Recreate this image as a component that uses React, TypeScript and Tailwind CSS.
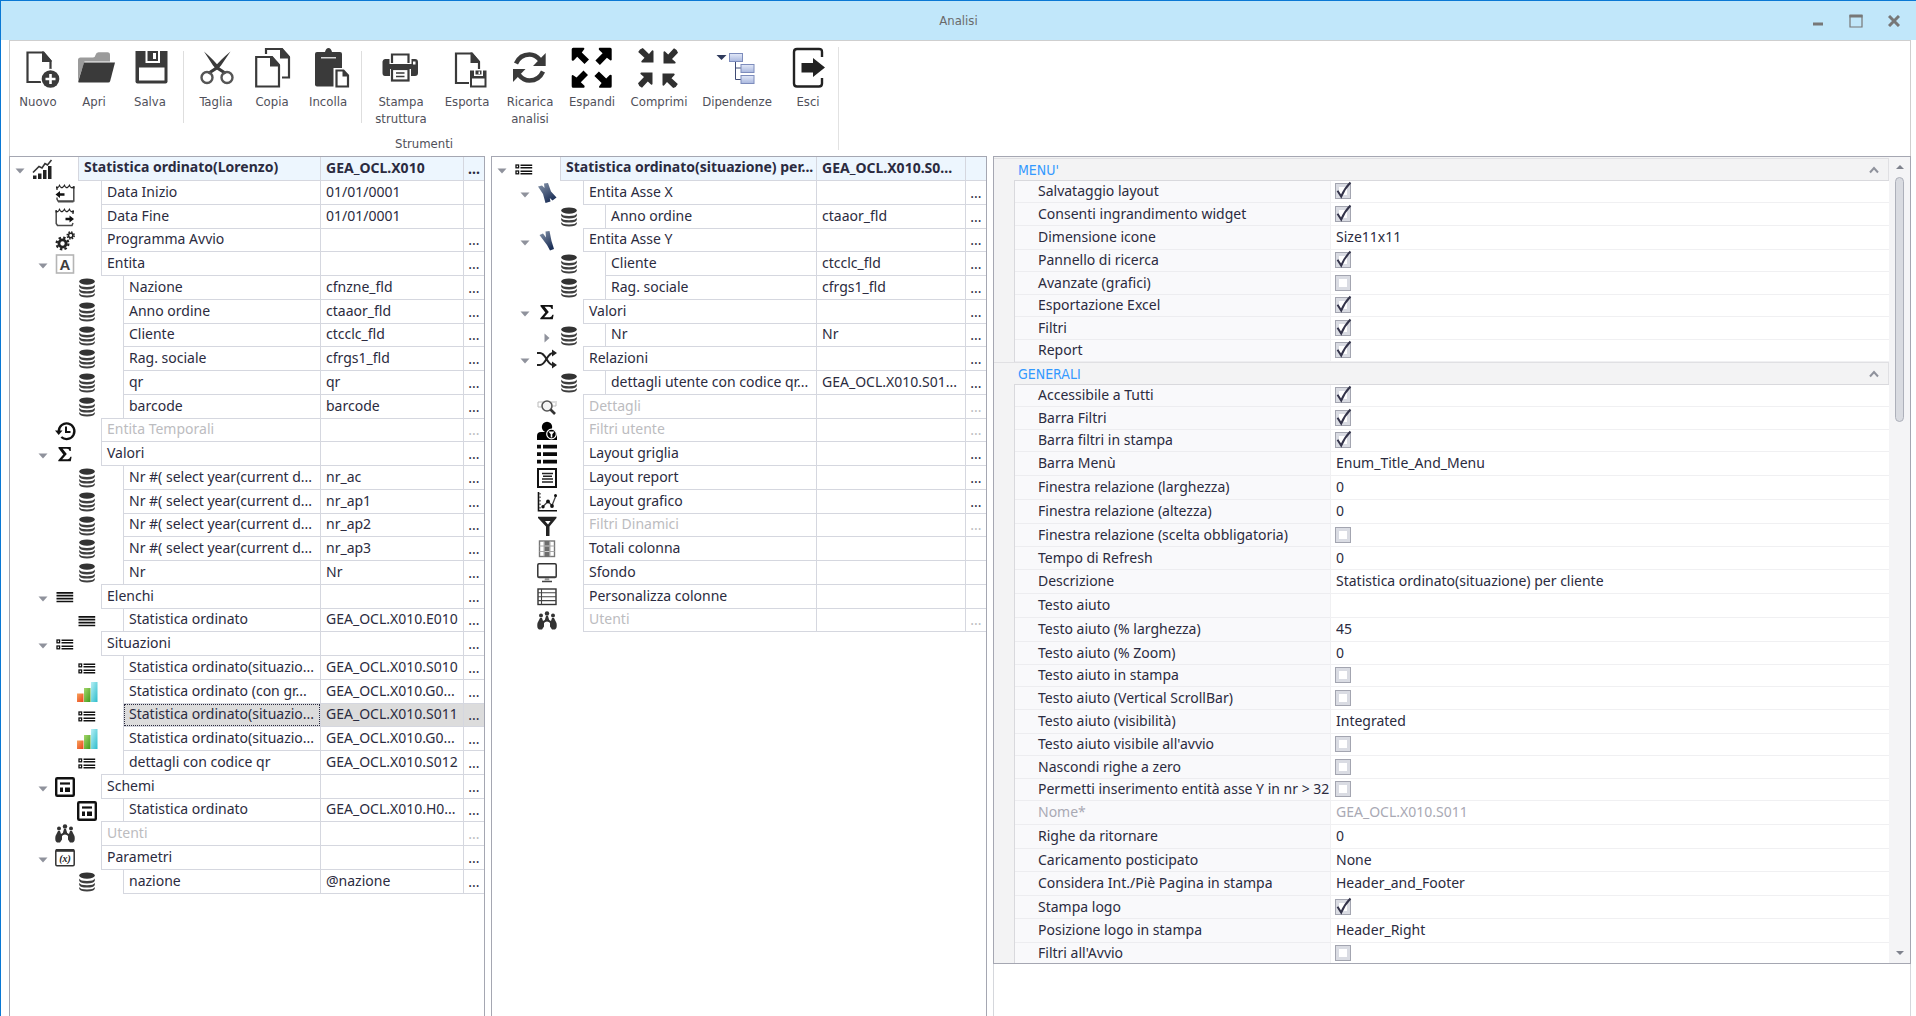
import React from "react";

const D = "#3a3a3a";

/* ---------- ribbon icons (42 x 42 grid) ---------- */

const Big = ({ children }: { children: React.ReactNode }) => (
  <svg viewBox="0 0 42 42" className="size-[42px] shrink-0 overflow-visible" fill="none" aria-hidden="true">
    {children}
  </svg>
);

const IconNuovo = () => (
  <Big>
    <path d="M25 35H10.500V5.500H26L33.500 14V23" stroke={D} strokeWidth="2.200" />
    <path d="M25 4.500H27L34.500 13.500V15H25Z" fill={D} />
    <circle cx="33.500" cy="32" r="10.200" fill="#fff" />
    <circle cx="33.500" cy="32" r="8.800" fill={D} />
    <path d="M33.500 27v10M28.500 32h10" stroke="#fff" strokeWidth="2.600" />
  </Big>
);
const IconApri = () => (
  <Big>
    <path d="M5 34V13q0-2.500 2.500-2.500H20q2 0 2.500-2.500.7-2.700 3-2.700h9q2.500 0 2.500 2.700V14.500H11.500Z" fill="#9b9b9b" />
    <path d="M11 15.500H42L37.200 34q-.4 1.500-2 1.500H6q-1 0-.7-1.200Z" fill={D} />
  </Big>
);
const IconSalva = () => (
  <Big>
    <path d="M6.500 4H38.500V34.500q0 2-2 2h-28q-2 0-2-2Z" fill={D} />
    <path d="M16.500 4h2v10h10.500V4h2v12h-14.500Z" fill="#fff" />
    <rect x="24" y="6" width="3" height="6" fill="#fff" />
    <rect x="10" y="20.500" width="25.500" height="13" fill="#fff" />
  </Big>
);
const IconTaglia = () => (
  <Big>
    <path d="M9 4.500Q20 14 24.500 20.500L32 25.500 29.500 27.500 21 22 18 18.500Z" fill={D} />
    <path d="M35.500 4.500Q24 14 19.500 20.500L12 25.500 14.500 27.500 23 22 26 18.500Z" fill={D} />
    <circle cx="12" cy="30.500" r="5.500" stroke="#555" strokeWidth="2.400" />
    <circle cx="32" cy="30.500" r="5.500" stroke="#555" strokeWidth="2.400" />
  </Big>
);
const IconCopia = () => (
  <Big>
    <path d="M15 7V2H30.500L38 10.500V30.500H31" stroke={D} strokeWidth="2.200" />
    <path d="M29 1H31.500L39 9.500V11.500H29Z" fill={D} />
    <path d="M5.200 10H20.500L28 18.500V39.500H5.200Z" stroke={D} strokeWidth="2.200" />
    <path d="M19 9H21.500L29 17.500V19.500H19Z" fill={D} />
  </Big>
);
const IconIncolla = () => (
  <Big>
    <path d="M10 5h23q2 0 2 2v32.500H10q-2 0-2-2V7q0-2 2-2Z" fill={D} />
    <path d="M14.500 10.500V5H18q1-4 3.500-4T25 5h3.500v5.500Z" fill={D} />
    <path d="M14 10.800H29" stroke="#fff" strokeWidth="1.200" />
    <path d="M26.500 21H38L43.500 27V42H26.500Z" fill="#fff" />
    <path d="M29.500 23.500H36.500L41 28.500V39.500H29.500Z" stroke={D} strokeWidth="2.200" />
    <path d="M35.500 23v6.500H42Z" fill={D} />
  </Big>
);
const IconStampa = () => (
  <Big>
    <path d="M5 12H35q3 0 3 3V26q0 3-3 3h-4V22H10v7H5q-2.500 0-2.500-3V14.500Q3 12 5 12Z" fill={D} />
    <path d="M10.500 17V6.500H30.500V17" fill="#fff" stroke="#fff" strokeWidth="2" />
    <path d="M12 16V7.500H28.500V16" stroke={D} strokeWidth="2.200" />
    <rect x="12" y="22" width="16.500" height="11.500" fill="#fff" stroke={D} strokeWidth="2.200" />
    <path d="M16 26h8.500M16 29.500h8.500" stroke={D} strokeWidth="1.300" />
    <rect x="33" y="14.500" width="2.500" height="3" fill="#fff" />
  </Big>
);
const IconEsporta = () => (
  <Big>
    <path d="M23 36H10V6.500H25.500L33 15V22" stroke={D} strokeWidth="2.200" />
    <path d="M24.500 5.500H26.500L34 14.500V16H24.500Z" fill={D} />
    <path d="M24 23.500H40.500V40.500H24Z" fill={D} />
    <path d="M28 23v6h9v-6h-1.500v4.500h-6V23Z" fill="#fff" />
    <rect x="32.500" y="24.500" width="1.500" height="2.500" fill="#fff" />
    <rect x="26" y="31.500" width="12.500" height="7" fill="#fff" />
  </Big>
);
const IconRicarica = () => (
  <Big>
    <path d="M7 16.500Q11 7.500 20.500 7.500 26.500 7.500 31 13" stroke={D} strokeWidth="4.400" />
    <path d="M36.700 6V19H24Z" fill={D} />
    <path d="M34 24.500Q30 33.500 20.500 33.500 14.500 33.500 10 28" stroke={D} strokeWidth="4.400" />
    <path d="M4 35V22H16.500Z" fill={D} />
  </Big>
);
const IconEspandi = () => (
  <Big>
    {[0, 90, 180, 270].map((a) => (
      <g key={a} transform={`rotate(${a} 20.700 20.700)`}>
        <path d="M.7 2.200q0-1.500 1.500-1.500h10.500q1.200.5.500 1.500L10.800 5.500 18 12.500 13.500 17 6.200 9.800 2.700 13.500q-1.700.5-2-.5Z" fill="#000" />
      </g>
    ))}
  </Big>
);
const IconComprimi = () => (
  <Big>
    {[0, 90, 180, 270].map((a) => (
      <g key={a} transform={`rotate(${a} 20 21)`}>
        <path d="M15.500 15.500H4q-1.200-.5-.5-1.500L6.500 10.800 .2 5Q1.500 1.800 4.800 1L11 7 14 3.500q1-.5 1.500.5Z" fill="#303030" />
      </g>
    ))}
  </Big>
);
const IconDipendenze = () => (
  <Big>
    <defs>
      <linearGradient id="depBox" x1="0" y1="0" x2="0" y2="1">
        <stop offset="0" stopColor="#e3e9f8" />
        <stop offset="1" stopColor="#a9b7de" />
      </linearGradient>
    </defs>
    <path d="M.5 8H10.500L5.500 13Z" fill="#2f3a5c" />
    <path d="M19.500 14V32.500H25M19.500 21H25" stroke="#3f4a74" strokeWidth="1" />
    <rect x="13.500" y="6.500" width="13" height="8" fill="url(#depBox)" stroke="#7d8cbc" />
    <rect x="25" y="17.500" width="13" height="8" fill="url(#depBox)" stroke="#7d8cbc" />
    <rect x="25" y="28.500" width="13" height="8" fill="url(#depBox)" stroke="#7d8cbc" />
  </Big>
);
const IconEsci = () => (
  <Big>
    <path d="M35 10V5q0-3-3-3H10Q7 2 7 5V36.500q0 3 3 3H32q3 0 3-3V31" stroke="#222" strokeWidth="2.400" />
    <path d="M14.500 16H26V11L38 20.500 26 30V25.500H14.500Z" fill="#222" />
  </Big>
);

type Tool = { label: string; width: string; Icon: () => React.ReactElement };
const tools: Tool[][] = [
  [
    { label: "Nuovo", width: "w-14", Icon: IconNuovo },
    { label: "Apri", width: "w-14", Icon: IconApri },
    { label: "Salva", width: "w-14", Icon: IconSalva },
  ],
  [
    { label: "Taglia", width: "w-14", Icon: IconTaglia },
    { label: "Copia", width: "w-14", Icon: IconCopia },
    { label: "Incolla", width: "w-14", Icon: IconIncolla },
  ],
  [
    { label: "Stampa struttura", width: "w-[70px]", Icon: IconStampa },
    { label: "Esporta", width: "w-[62px]", Icon: IconEsporta },
    { label: "Ricarica analisi", width: "w-16", Icon: IconRicarica },
    { label: "Espandi", width: "w-[60px]", Icon: IconEspandi },
    { label: "Comprimi", width: "w-[74px]", Icon: IconComprimi },
    { label: "Dipendenze", width: "w-[82px]", Icon: IconDipendenze },
    { label: "Esci", width: "w-[60px]", Icon: IconEsci },
  ],
];

/* ---------- tree icons (20 x 20 grid) ---------- */

const smallIcons: Record<string, React.ReactNode> = {
  stats: (
    <>
      <path d="M1 20v-3.500h3.500V20zM6 20v-5.500h3.500V20zM11 20v-9h3.500V20zM16 20V7h3.500v13z" fill="#222" />
      <path d="M1 13.500L7 7.500 10 9 13 4.500 15.500 6 19.500 1" stroke="#333" strokeWidth="1.600" fill="none" />
    </>
  ),
  calIn: (
    <>
      <path d="M2 7V3.500M18.800 3V18H3L2 16V14.500M3 18.700H18.500" stroke="#4a4a4a" strokeWidth="1.500" fill="none" />
      <path d="M1 5.500V3.500L3 4 4.500 1 6 4 8 3.500 9.500 1 11 4 13 3.500 14.500 1 16 4 19.500 3.500V5.500L16 5.200 14.500 3.500 12.500 5.200H11L9.500 3.500 7.500 5.200H6L4.500 3.500 3 5.200Z" fill="#222" />
      <path d="M0.500 11.500L5 8V10.200H9.500V12.800H5V15Z" fill="#111" />
    </>
  ),
  calOut: (
    <>
      <path d="M18 7V3.500M1.200 3V16.500L2.500 18.500H17L18 16" stroke="#4a4a4a" strokeWidth="1.500" fill="none" />
      <path d="M.5 5.500V3.500L3 4 4.500 1 6 4 8 3.500 9.500 1 11 4 13 3.500 14.500 1 16 4 19 3.500V5.500L16 5.200 14.500 3.500 12.500 5.200H11L9.500 3.500 7.500 5.200H6L4.500 3.500 3 5.200Z" fill="#222" />
      <path d="M19 12L14.500 8.500V10.700H10.500V13.300H14.500V15.500Z" fill="#111" />
    </>
  ),
  gears: (
    <>
      <circle cx="7.500" cy="12.500" r="3.600" stroke="#222" strokeWidth="2.800" fill="none" />
      <circle cx="7.500" cy="12.500" r="5.900" stroke="#222" strokeWidth="2.200" fill="none" strokeDasharray="2.400 2.230" />
      <circle cx="15.700" cy="4.500" r="2.200" stroke="#222" strokeWidth="1.600" fill="none" />
      <circle cx="15.700" cy="4.500" r="3.500" stroke="#222" strokeWidth="1.500" fill="none" strokeDasharray="1.500 1.250" />
    </>
  ),
  letter: (
    <>
      <rect x="1.500" y="1" width="17" height="18" fill="#fff" stroke="#b5b5b5" strokeWidth="1.600" />
      <text x="10" y="15.500" textAnchor="middle" fontSize="15" fontWeight="bold" fontFamily="Liberation Sans, sans-serif" fill="#3d3d3d">
        A
      </text>
    </>
  ),
  db: (
    <>
      <ellipse cx="10" cy="3.600" rx="7.800" ry="3.200" fill="#333" />
      <path d="M2.200 6.500q1 2.500 7.800 2.500t7.800-2.500v2.300q-1 2.600-7.800 2.600T2.200 8.800zM2.200 10.700q1 2.500 7.800 2.500t7.800-2.500V13q-1 2.600-7.800 2.600T2.200 13zM2.200 14.900q1 2.500 7.800 2.500t7.800-2.500v1.900q-1 2.700-7.800 2.700t-7.800-2.700z" fill="#3f3f3f" />
    </>
  ),
  history: (
    <>
      <path d="M3.800 10.500A7.800 7.800 0 1 1 6.300 16" stroke="#111" strokeWidth="2.300" fill="none" />
      <path d="M0 9.500H7.500L3.700 14Z" fill="#111" />
      <path d="M11 5.500V11H15.500" stroke="#111" strokeWidth="2" fill="none" />
    </>
  ),
  sigma: <path d="M3.500 3H15.800V7H14.600Q14.200 4.800 12 4.800H7.600L11.800 10 7.200 15.200H12.800Q14.800 15.200 15.400 12.800H16.600L15.800 17.200H3.300V16.200L8.300 10.500 3.500 4.200Z" fill="#111" />,
  lines: (
    <>
      <path d="M1.500 5.800H18.200M1.500 8.700H18.200M1.500 11.600H18.200M1.500 14.500H18.200" stroke="#111" strokeWidth="1.700" />
    </>
  ),
  list: (
    <>
      <path d="M6.500 6.300H18.200M6.500 8.800H18.200M6.500 12.200H18.200M6.500 14.800H18.200" stroke="#111" strokeWidth="1.600" />
      <rect x="2" y="6" width="2.600" height="2.800" fill="none" stroke="#111" strokeWidth="1.300" />
      <rect x="2" y="12" width="2.600" height="2.800" fill="none" stroke="#111" strokeWidth="1.300" />
    </>
  ),
  chart: (
    <>
      <defs>
        <linearGradient id="barR" x1="0" y1="0" x2="1" y2="1">
          <stop offset="0" stopColor="#f7a35c" />
          <stop offset="1" stopColor="#e8431a" />
        </linearGradient>
        <linearGradient id="barG" x1="0" y1="0" x2="1" y2="1">
          <stop offset="0" stopColor="#a5d76a" />
          <stop offset="1" stopColor="#3f9a1d" />
        </linearGradient>
        <linearGradient id="barB" x1="0" y1="0" x2="1" y2="1">
          <stop offset="0" stopColor="#b8f0f5" />
          <stop offset="1" stopColor="#2cbccb" />
        </linearGradient>
      </defs>
      <rect x="0" y="11.500" width="6.500" height="8.500" fill="url(#barR)" />
      <rect x="7" y="6" width="6.500" height="14" fill="url(#barG)" />
      <rect x="14" y="0" width="6.500" height="20" fill="url(#barB)" />
    </>
  ),
  scheme: (
    <>
      <rect x="1.200" y="1.200" width="17.600" height="17.600" rx="1" fill="#fff" stroke="#111" strokeWidth="2.400" />
      <path d="M5 6.500H15" stroke="#111" strokeWidth="2.200" />
      <path d="M5 10.500h3V15H5zM10 10.500h5V15h-5z" fill="#111" />
    </>
  ),
  users: (
    <>
      <circle cx="10" cy="2.500" r="2.200" fill="#333" />
      <circle cx="4" cy="4.500" r="2" fill="#333" />
      <circle cx="16" cy="4.500" r="2" fill="#333" />
      <path d="M9 5h2l1.200 4 1.800 1 1-3h2l2.500 5q1 5-1.500 6.500h-3l-2-3V12q-1-1.500-3-1.500T7 12v3.500l-2 3H2Q-.5 17 .5 12L3 7h2l1 3 1.800-1z" fill="#333" />
    </>
  ),
  param: (
    <>
      <rect x="0.800" y="1.800" width="18.400" height="15.900" rx="1.200" fill="#fff" stroke="#333" strokeWidth="1.500" />
      <path d="M1 2.500H19" stroke="#333" strokeWidth="2.600" />
      <text x="10" y="13.500" textAnchor="middle" fontSize="10" fontStyle="italic" fontWeight="bold" fontFamily="Liberation Serif, serif" fill="#222">
        (x)
      </text>
    </>
  ),
  axisX: (
    <>
      <defs>
        <linearGradient id="axis" x1="0" y1="0" x2="0.600" y2="1">
          <stop offset="0" stopColor="#8796ab" />
          <stop offset="1" stopColor="#1c2f57" />
        </linearGradient>
      </defs>
      <path d="M1 3.500L5 2.500 7.500 5 7 .5 11 0 14 8.500 19.500 14.500 15.500 17.500 12.800 15 13.500 18.500 8.500 20 6 11Z" fill="url(#axis)" />
    </>
  ),
  axisY: <path d="M2.500 4L6 2.500 9 6.500 8.500 .5 12.500 0 14.500 10 17 18 13 19.500 10 14Z" fill="url(#axis)" />,
  shuffle: (
    <>
      <path d="M0 4H3Q6 4 9.500 10T16 16M0 16H3Q6 16 9.500 10T16 4" stroke="#222" strokeWidth="2" fill="none" />
      <path d="M15 .5L20 4 15 7.500ZM15 12.500L20 16 15 19.500Z" fill="#222" />
    </>
  ),
  detail: (
    <>
      <path d="M1 5h17M1 5v5h3M19 4v5h-3" stroke="#bbb" strokeWidth="1" fill="none" />
      <circle cx="10" cy="9" r="5" fill="#f4f4f4" stroke="#555" strokeWidth="1.600" />
      <path d="M13.500 12.500L18 17" stroke="#333" strokeWidth="2.600" />
    </>
  ),
  userFilter: (
    <>
      <circle cx="10" cy="6" r="5.200" fill="#000" />
      <path d="M0 19v-4q0-4 4-4h12q4 0 4 4v4z" fill="#000" />
      <circle cx="14.500" cy="13" r="4.800" fill="#000" stroke="#fff" strokeWidth="1.200" />
      <path d="M11.500 10.500h6L15.300 13.300V16.500H13.700V13.300Z" fill="#fff" />
    </>
  ),
  grid: <path d="M0 .8h4v3.600H0zM6 .8h14v3.600H6zM0 8.300h4v3.600H0zM6 8.300h14v3.600H6zM0 15.800h4v3.600H0zM6 15.800h14v3.600H6z" fill="#0a0a0a" />,
  report: (
    <>
      <rect x="1" y="1" width="18" height="18" fill="#fff" stroke="#111" strokeWidth="2" />
      <path d="M5 5.500H16M6 8.300H15M5 11.100H16M5 13.900H16" stroke="#222" strokeWidth="1.500" />
    </>
  ),
  graph: (
    <>
      <path d="M1.500 0V18.800H20" stroke="#111" strokeWidth="1.600" fill="none" strokeLinejoin="miter" />
      <path d="M3 1v16" stroke="#333" strokeWidth="1.200" strokeDasharray="1.500 2" />
      <path d="M6 14.500L11 9.500 15 13.500 19 3.500" stroke="#444" strokeWidth="1.300" fill="none" />
      <circle cx="6" cy="14.800" r="1.700" fill="#111" />
      <circle cx="11" cy="9.500" r="1.900" fill="#111" />
      <circle cx="15" cy="14" r="1.900" fill="#111" />
      <circle cx="18.500" cy="3.500" r="1.500" fill="#111" />
    </>
  ),
  funnel: (
    <>
      <path d="M1 .8H19.500V2L12.500 10.500V20H9V10.500L1 2Z" fill="#222" />
      <path d="M8 5h5.500L11 8.500z" fill="#fff" />
    </>
  ),
  totals: (
    <>
      <rect x="2.500" y="2" width="15" height="15.500" fill="#fff" stroke="#777" strokeWidth="1.400" />
      <path d="M2.500 7H17.500M2.500 12.500H17.500M7 2V17.500M13 2V17.500" stroke="#aaa" strokeWidth="1" />
      <rect x="7.500" y="2" width="5" height="15.500" fill="#6d6d6d" />
      <path d="M7.500 7h5M7.500 12.500h5" stroke="#ccc" strokeWidth="1" />
    </>
  ),
  monitor: (
    <>
      <rect x="0.800" y="0.800" width="18.400" height="13.600" rx="1.200" fill="#fff" stroke="#333" strokeWidth="1.500" />
      <path d="M1 14H19M5 18.500H15" stroke="#444" strokeWidth="1.500" />
      <path d="M8 15h4l.5 2.500h-5z" fill="#999" />
    </>
  ),
  columns: (
    <>
      <rect x="1" y="2" width="18" height="15.500" fill="#fff" stroke="#333" strokeWidth="1.400" />
      <path d="M1 5.800H19M1 9.700H19M1 13.600H19M4.500 2V17.500" stroke="#444" strokeWidth="1.100" />
    </>
  ),
};

/* ---------- trees ---------- */

type Node = {
  level: 1 | 2 | 3;
  icon: string;
  label: string;
  value?: string;
  arrow?: "open" | "closed";
  more?: boolean;
  dim?: boolean;
  selected?: boolean;
};

const n = (level: 1 | 2 | 3, icon: string, label: string, value = "", extra: Partial<Node> = {}): Node => ({
  level,
  icon,
  label,
  value,
  more: true,
  ...extra,
});

const leftTree: Node[] = [
  n(1, "stats", "Statistica ordinato(Lorenzo)", "GEA_OCL.X010", { arrow: "open" }),
  n(2, "calIn", "Data Inizio", "01/01/0001", { more: false }),
  n(2, "calOut", "Data Fine", "01/01/0001", { more: false }),
  n(2, "gears", "Programma Avvio"),
  n(2, "letter", "Entita", "", { arrow: "open" }),
  n(3, "db", "Nazione", "cfnzne_fld"),
  n(3, "db", "Anno ordine", "ctaaor_fld"),
  n(3, "db", "Cliente", "ctcclc_fld"),
  n(3, "db", "Rag. sociale", "cfrgs1_fld"),
  n(3, "db", "qr", "qr"),
  n(3, "db", "barcode", "barcode"),
  n(2, "history", "Entita Temporali", "", { dim: true }),
  n(2, "sigma", "Valori", "", { arrow: "open" }),
  n(3, "db", "Nr #( select year(current d...", "nr_ac"),
  n(3, "db", "Nr #( select year(current d...", "nr_ap1"),
  n(3, "db", "Nr #( select year(current d...", "nr_ap2"),
  n(3, "db", "Nr #( select year(current d...", "nr_ap3"),
  n(3, "db", "Nr", "Nr"),
  n(2, "lines", "Elenchi", "", { arrow: "open" }),
  n(3, "lines", "Statistica ordinato", "GEA_OCL.X010.E010"),
  n(2, "list", "Situazioni", "", { arrow: "open" }),
  n(3, "list", "Statistica ordinato(situazio...", "GEA_OCL.X010.S010"),
  n(3, "chart", "Statistica ordinato (con gr...", "GEA_OCL.X010.G0..."),
  n(3, "list", "Statistica ordinato(situazio...", "GEA_OCL.X010.S011", { selected: true }),
  n(3, "chart", "Statistica ordinato(situazio...", "GEA_OCL.X010.G0..."),
  n(3, "list", "dettagli con codice qr", "GEA_OCL.X010.S012"),
  n(2, "scheme", "Schemi", "", { arrow: "open" }),
  n(3, "scheme", "Statistica ordinato", "GEA_OCL.X010.H0..."),
  n(2, "users", "Utenti", "", { dim: true }),
  n(2, "param", "Parametri", "", { arrow: "open" }),
  n(3, "db", "nazione", "@nazione"),
];

const midTree: Node[] = [
  n(1, "list", "Statistica ordinato(situazione) per...", "GEA_OCL.X010.S0...", { arrow: "open", more: false }),
  n(2, "axisX", "Entita Asse X", "", { arrow: "open" }),
  n(3, "db", "Anno ordine", "ctaaor_fld"),
  n(2, "axisY", "Entita Asse Y", "", { arrow: "open" }),
  n(3, "db", "Cliente", "ctcclc_fld"),
  n(3, "db", "Rag. sociale", "cfrgs1_fld"),
  n(2, "sigma", "Valori", "", { arrow: "open" }),
  n(3, "db", "Nr", "Nr", { arrow: "closed" }),
  n(2, "shuffle", "Relazioni", "", { arrow: "open" }),
  n(3, "db", "dettagli utente con codice qr...", "GEA_OCL.X010.S01..."),
  n(2, "detail", "Dettagli", "", { dim: true }),
  n(2, "userFilter", "Filtri utente", "", { dim: true }),
  n(2, "grid", "Layout griglia"),
  n(2, "report", "Layout report"),
  n(2, "graph", "Layout grafico"),
  n(2, "funnel", "Filtri Dinamici", "", { dim: true }),
  n(2, "totals", "Totali colonna", "", { more: false }),
  n(2, "monitor", "Sfondo", "", { more: false }),
  n(2, "columns", "Personalizza colonne", "", { more: false }),
  n(2, "users", "Utenti", "", { dim: true }),
];

const indent = { 1: "pl-[3px]", 2: "pl-[26px]", 3: "pl-[48px]" };

function Tree({ rows, name, valueCol }: { rows: Node[]; name: string; valueCol: string }) {
  return (
    <table aria-label={name} className="w-full table-fixed border-collapse">
      <colgroup>
        <col />
        <col className={valueCol} />
        <col className="w-[21px]" />
      </colgroup>
      <tbody>
        {rows.map((r, i) => {
          const h = i % 4 === 3 ? "h-[23px]" : "h-6";
          const tone = r.dim ? "text-[#bcbcc0]" : "text-[#2b2b40]";
          const bg = r.level === 1 ? "bg-[#edf6fe]" : r.selected ? "bg-[#dcdcdc]" : "";
          const weight = r.level === 1 ? "font-bold" : "";
          return (
            <tr key={i} aria-selected={r.selected}>
              <td className="p-0">
                <div className={`flex ${h} ${indent[r.level]}`}>
                  <span className="flex w-[18px] shrink-0 items-center pt-1">
                    {r.arrow && (
                      <button type="button" aria-label={r.arrow === "open" ? "Comprimi nodo" : "Espandi nodo"} className="flex size-[14px] items-center justify-center">
                        <svg viewBox="0 0 10 10" className="size-[10px]" aria-hidden="true">
                          {r.arrow === "open" ? <path d="M.5 2.500H9.500L5 7.500Z" fill="#8f929c" /> : <path d="M2.500 .5V9.500L7.500 5Z" fill="#8f929c" />}
                        </svg>
                      </button>
                    )}
                  </span>
                  <span className="flex w-[47px] shrink-0 items-center pl-px">
                    <svg viewBox="0 0 20 20" className="size-5 overflow-visible" aria-hidden="true">
                      {smallIcons[r.icon]}
                    </svg>
                  </span>
                  <span
                    className={`-mt-px flex min-w-0 grow items-center whitespace-nowrap border-b border-l border-[#d5d7df] ${
                      r.level === 1 ? "" : "border-t"
                    } ${bg}`}
                  >
                    <span
                      className={`flex h-full min-w-0 grow items-center pb-0.5 ${tone} ${weight} ${
                        r.selected ? "border border-dotted border-[#2b2b40] pl-1" : "pl-[5px]"
                      }`}
                    >
                      {r.label}
                    </span>
                  </span>
                </div>
              </td>
              <td className="p-0">
                <div className={`flex ${h} items-center whitespace-nowrap border-b border-l border-[#d5d7df] pb-0.5 pl-[5px] ${tone} ${weight} ${bg}`}>
                  {r.value}
                </div>
              </td>
              <td className="p-0">
                <div className={`flex ${h} items-center justify-center border-b border-l border-[#d5d7df] ${tone} ${weight} ${bg}`}>
                  {r.more && (
                    <button type="button" aria-label={`Dettagli ${r.label}`}>
                      ...
                    </button>
                  )}
                </div>
              </td>
            </tr>
          );
        })}
      </tbody>
    </table>
  );
}

/* ---------- properties ---------- */

type Prop = { label: string; value: string | boolean; dim?: boolean };
const sections: { title: string; rows: Prop[] }[] = [
  {
    title: "MENU'",
    rows: [
      { label: "Salvataggio layout", value: true },
      { label: "Consenti ingrandimento widget", value: true },
      { label: "Dimensione icone", value: "Size11x11" },
      { label: "Pannello di ricerca", value: true },
      { label: "Avanzate (grafici)", value: false },
      { label: "Esportazione Excel", value: true },
      { label: "Filtri", value: true },
      { label: "Report", value: true },
    ],
  },
  {
    title: "GENERALI",
    rows: [
      { label: "Accessibile a Tutti", value: true },
      { label: "Barra Filtri", value: true },
      { label: "Barra filtri in stampa", value: true },
      { label: "Barra Menù", value: "Enum_Title_And_Menu" },
      { label: "Finestra relazione (larghezza)", value: "0" },
      { label: "Finestra relazione (altezza)", value: "0" },
      { label: "Finestra relazione (scelta obbligatoria)", value: false },
      { label: "Tempo di Refresh", value: "0" },
      { label: "Descrizione", value: "Statistica ordinato(situazione) per cliente" },
      { label: "Testo aiuto", value: "" },
      { label: "Testo aiuto (% larghezza)", value: "45" },
      { label: "Testo aiuto (% Zoom)", value: "0" },
      { label: "Testo aiuto in stampa", value: false },
      { label: "Testo aiuto (Vertical ScrollBar)", value: false },
      { label: "Testo aiuto (visibilità)", value: "Integrated" },
      { label: "Testo aiuto visibile all'avvio", value: false },
      { label: "Nascondi righe a zero", value: false },
      { label: "Permetti inserimento entità asse Y in nr > 32", value: false },
      { label: "Nome*", value: "GEA_OCL.X010.S011", dim: true },
      { label: "Righe da ritornare", value: "0" },
      { label: "Caricamento posticipato", value: "None" },
      { label: "Considera Int./Piè Pagina in stampa", value: "Header_and_Footer" },
      { label: "Stampa logo", value: true },
      { label: "Posizione logo in stampa", value: "Header_Right" },
      { label: "Filtri all'Avvio", value: false },
    ],
  },
];

function PropertyRow({ id, row, height }: { id: string; row: Prop; height: string }) {
  const tone = row.dim ? "text-[#a9a9b4]" : "text-[#2b2b40]";
  return (
    <div className={`flex ${height} shrink-0 ${tone}`}>
      <label htmlFor={id} className="flex w-[315px] shrink-0 items-center whitespace-nowrap border-b border-[#ededf0] bg-[#f9f9fb] pb-px pl-[23px]">
        {row.label}
      </label>
      <div className="flex grow items-center border-b border-l border-[#f0f0f2] bg-white pb-px pl-1">
        {typeof row.value === "boolean" ? (
          <span className="relative flex size-4">
            <input
              id={id}
              type="checkbox"
              defaultChecked={row.value}
              className="peer size-4 appearance-none border border-[#a3a5b0] bg-white shadow-[inset_0_0_0_3px_#dadce3]"
            />
            <svg viewBox="0 0 16 16" className="pointer-events-none absolute inset-0 hidden size-4 overflow-visible peer-checked:block" aria-hidden="true">
              <path d="M2.500 7.800L6.200 13.500Q9.500 5.500 15.500 -.5" stroke="#34344a" strokeWidth="2" fill="none" />
            </svg>
          </span>
        ) : (
          <input id={id} type="text" defaultValue={row.value} disabled={row.dim} className="w-full bg-transparent pl-px outline-none" />
        )}
      </div>
    </div>
  );
}

function PropertySection({ index }: { index: number }) {
  const { title, rows } = sections[index];
  let texts = 0;
  let checks = 0;
  return (
    <section className="flex shrink-0 flex-col bg-[#f3f3f4]">
      <button
        type="button"
        className="flex h-[22px] shrink-0 items-center justify-between border-r border-t border-[#e0e0e3] pl-6 pr-[9px] font-['DejaVu_Sans_Condensed','DejaVu_Sans',sans-serif] text-sm text-[#3399ff]"
      >
        <span>{title}</span>
        <svg viewBox="0 0 10 10" className="size-[10px]" fill="none" aria-hidden="true">
          <path d="M1 7.500L5 3 9 7.500" stroke="#8f929c" strokeWidth="2" />
        </svg>
      </button>
      <div className="ml-5 flex flex-col border-l border-t border-[#d9d9dd]">
        {rows.map((row, i) => {
          const isCheck = typeof row.value === "boolean";
          const height = isCheck ? (checks++ % 2 ? "h-[23px]" : "h-[22px]") : texts++ % 4 === 3 ? "h-[23px]" : "h-6";
          return <PropertyRow key={row.label} id={`p${index}-${i}`} row={row} height={height} />;
        })}
      </div>
    </section>
  );
}

/* ---------- window ---------- */

export default function App() {
  return (
    <div className="flex h-screen flex-col overflow-hidden border-l border-t border-[#0a78d4] bg-white font-['Noto_Sans','Open_Sans',sans-serif] text-sm leading-5 text-[#2b2b40]">
      <header className="flex h-[39px] shrink-0 items-center bg-[#c1e7fa] font-['DejaVu_Sans_Condensed','DejaVu_Sans',sans-serif]">
        <div className="w-32" />
        <h1 className="grow text-center text-[13px] text-[#6a6a6a]">Analisi</h1>
        <div className="flex w-32 justify-end gap-[26px] pr-4">
          <button type="button" aria-label="Riduci a icona">
            <svg viewBox="0 0 12 12" className="size-3" fill="none" aria-hidden="true">
              <path d="M1 9H11" stroke="#777" strokeWidth="3" />
            </svg>
          </button>
          <button type="button" aria-label="Ingrandisci">
            <svg viewBox="0 0 12 12" className="size-3 overflow-visible" fill="none" aria-hidden="true">
              <path d="M0 .5H12V12H0Z" stroke="#777" strokeWidth="1.200" />
              <path d="M-.5 1H12.500" stroke="#777" strokeWidth="3" />
            </svg>
          </button>
          <button type="button" aria-label="Chiudi">
            <svg viewBox="0 0 12 12" className="size-3" fill="none" aria-hidden="true">
              <path d="M1 1L11 11M11 1L1 11" stroke="#777" strokeWidth="3" />
            </svg>
          </button>
        </div>
      </header>

      <div
        role="toolbar"
        aria-label="Strumenti"
        className="ml-2 mr-[5px] flex h-[116px] shrink-0 border-x border-t border-[#cfcfcf] pt-[6px] font-['DejaVu_Sans_Condensed','DejaVu_Sans',sans-serif] text-[13px] leading-[17px] text-[#50505a]"
      >
        <div className="flex h-[103px] flex-col justify-between border-r border-[#e2e2e2]">
          <div className="flex">
            {tools.map((group, g) => (
              <React.Fragment key={g}>
                {g > 0 && <div className="ml-[5px] mr-1 mt-1 h-[72px] w-px bg-[#dedede]" />}
                {group.map(({ label, width, Icon }) => (
                  <button key={label} type="button" className={`flex ${width} flex-col items-center`}>
                    <Icon />
                    <span className="mt-1">
                      {label.split(" ").map((w) => (
                        <span key={w} className="block">
                          {w}
                        </span>
                      ))}
                    </span>
                  </button>
                ))}
              </React.Fragment>
            ))}
          </div>
          <div className="text-center leading-3">Strumenti</div>
        </div>
      </div>

      <main className="ml-2 mr-[5px] flex min-h-0 grow gap-[6px]">
        <div className="w-[476px] shrink-0 overflow-hidden border-x border-t border-[#a5a7b2]">
          <Tree rows={leftTree} name="Analisi" valueCol="w-[143px]" />
        </div>
        <div className="w-[496px] shrink-0 overflow-hidden border-x border-t border-[#a5a7b2]">
          <Tree rows={midTree} name="Situazione" valueCol="w-[149px]" />
        </div>
        <div className="flex min-w-0 grow flex-col">
          <div className="flex min-h-0 grow border border-[#a5a7b2]">
            <div className="flex min-w-0 grow flex-col overflow-hidden bg-[#f3f3f4] pt-px">
              {sections.map((s, i) => (
                <PropertySection key={s.title} index={i} />
              ))}
            </div>
            <div className="flex w-[21px] shrink-0 flex-col items-center bg-[#f4f4f6] py-2">
              <svg viewBox="0 0 8 4" className="h-1 w-2" aria-hidden="true">
                <path d="M0 4L4 0 8 4Z" fill="#7f828d" />
              </svg>
              <div className="mt-2 h-[245px] w-[9px] rounded-full border border-[#adb0ba] bg-[#d9dbe1]" />
              <svg viewBox="0 0 8 4" className="mt-auto h-1 w-2" aria-hidden="true">
                <path d="M0 0L4 4 8 0Z" fill="#7f828d" />
              </svg>
            </div>
          </div>
          <div className="h-[52px] shrink-0 border-x border-[#d5d7dc]" />
        </div>
      </main>
    </div>
  );
}
